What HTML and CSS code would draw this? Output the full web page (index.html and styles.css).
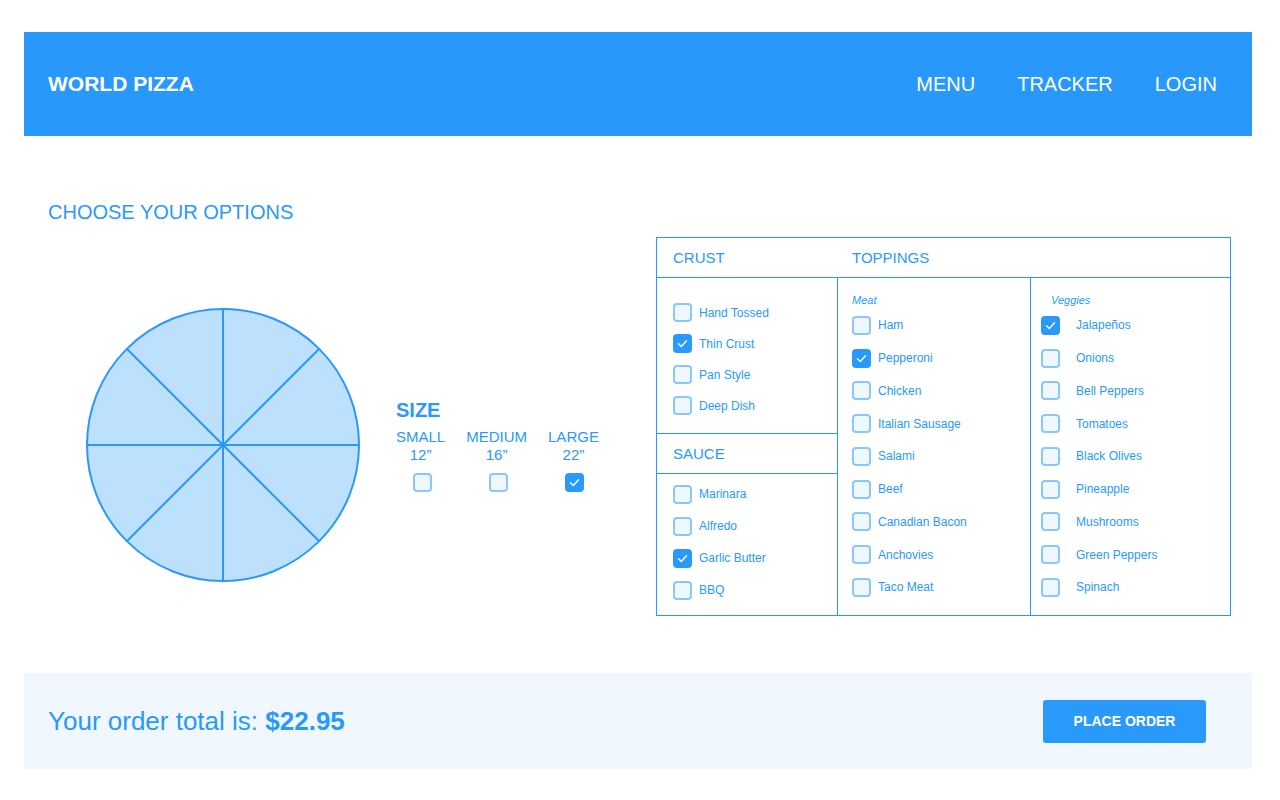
FILE: index.html
```html
<!DOCTYPE html>
<html lang="en">
<head>
<meta charset="utf-8">
<title>World Pizza</title>
<link rel="stylesheet" href="styles.css">
</head>
<body>
<header class="topbar">
  <div class="brand">WORLD PIZZA</div>
  <nav class="nav">
    <a class="nav-link">MENU</a>
    <a class="nav-link">TRACKER</a>
    <a class="nav-link">LOGIN</a>
  </nav>
</header>

<main class="builder">
  <h1 class="section-title">CHOOSE YOUR OPTIONS</h1>
  <div class="config">
    <div class="preview">
      <svg class="pizza" width="276" height="276" viewBox="0 0 276 276">
        <circle cx="138" cy="138" r="136" fill="#bde0fd" stroke="#2999fb" stroke-width="2"/>
        <g stroke="#2999fb" stroke-width="2">
          <line x1="138" y1="2" x2="138" y2="274"/>
          <line x1="2" y1="138" x2="274" y2="138"/>
          <line x1="41.8" y1="41.8" x2="234.2" y2="234.2"/>
          <line x1="234.2" y1="41.8" x2="41.8" y2="234.2"/>
        </g>
      </svg>
      <div class="size">
        <h2 class="size-title">SIZE</h2>
        <div class="size-options">
          <div class="size-opt">
            <span class="size-name">SMALL</span>
            <span class="size-inch">12”</span>
            <span class="box"></span>
          </div>
          <div class="size-opt">
            <span class="size-name">MEDIUM</span>
            <span class="size-inch">16”</span>
            <span class="box"></span>
          </div>
          <div class="size-opt">
            <span class="size-name">LARGE</span>
            <span class="size-inch">22”</span>
            <span class="box checked"><svg viewBox="0 0 19 19" width="19" height="19"><polyline points="5.5,9.8 8.3,12.4 13.5,6.8" fill="none" stroke="#fff" stroke-width="1.4" stroke-linecap="round" stroke-linejoin="round"/></svg></span>
          </div>
        </div>
      </div>
    </div>

    <div class="panel">
      <div class="panel-head crust-head">CRUST</div>
      <div class="panel-head toppings-head">TOPPINGS</div>

      <div class="col col-base">
        <ul class="list list-crust">
          <li class="item"><span class="box"></span><span class="label">Hand Tossed</span></li>
          <li class="item"><span class="box checked"><svg viewBox="0 0 19 19" width="19" height="19"><polyline points="5.5,9.8 8.3,12.4 13.5,6.8" fill="none" stroke="#fff" stroke-width="1.4" stroke-linecap="round" stroke-linejoin="round"/></svg></span><span class="label">Thin Crust</span></li>
          <li class="item"><span class="box"></span><span class="label">Pan Style</span></li>
          <li class="item"><span class="box"></span><span class="label">Deep Dish</span></li>
        </ul>
        <div class="sub-head">SAUCE</div>
        <ul class="list list-sauce">
          <li class="item"><span class="box"></span><span class="label">Marinara</span></li>
          <li class="item"><span class="box"></span><span class="label">Alfredo</span></li>
          <li class="item"><span class="box checked"><svg viewBox="0 0 19 19" width="19" height="19"><polyline points="5.5,9.8 8.3,12.4 13.5,6.8" fill="none" stroke="#fff" stroke-width="1.4" stroke-linecap="round" stroke-linejoin="round"/></svg></span><span class="label">Garlic Butter</span></li>
          <li class="item"><span class="box"></span><span class="label">BBQ</span></li>
        </ul>
      </div>

      <div class="col col-meat">
        <div class="group-label">Meat</div>
        <ul class="list list-topping">
          <li class="item"><span class="box"></span><span class="label">Ham</span></li>
          <li class="item"><span class="box checked"><svg viewBox="0 0 19 19" width="19" height="19"><polyline points="5.5,9.8 8.3,12.4 13.5,6.8" fill="none" stroke="#fff" stroke-width="1.4" stroke-linecap="round" stroke-linejoin="round"/></svg></span><span class="label">Pepperoni</span></li>
          <li class="item"><span class="box"></span><span class="label">Chicken</span></li>
          <li class="item"><span class="box"></span><span class="label">Italian Sausage</span></li>
          <li class="item"><span class="box"></span><span class="label">Salami</span></li>
          <li class="item"><span class="box"></span><span class="label">Beef</span></li>
          <li class="item"><span class="box"></span><span class="label">Canadian Bacon</span></li>
          <li class="item"><span class="box"></span><span class="label">Anchovies</span></li>
          <li class="item"><span class="box"></span><span class="label">Taco Meat</span></li>
        </ul>
      </div>

      <div class="col col-veg">
        <div class="group-label">Veggies</div>
        <ul class="list list-topping">
          <li class="item"><span class="box checked"><svg viewBox="0 0 19 19" width="19" height="19"><polyline points="5.5,9.8 8.3,12.4 13.5,6.8" fill="none" stroke="#fff" stroke-width="1.4" stroke-linecap="round" stroke-linejoin="round"/></svg></span><span class="label">Jalapeños</span></li>
          <li class="item"><span class="box"></span><span class="label">Onions</span></li>
          <li class="item"><span class="box"></span><span class="label">Bell Peppers</span></li>
          <li class="item"><span class="box"></span><span class="label">Tomatoes</span></li>
          <li class="item"><span class="box"></span><span class="label">Black Olives</span></li>
          <li class="item"><span class="box"></span><span class="label">Pineapple</span></li>
          <li class="item"><span class="box"></span><span class="label">Mushrooms</span></li>
          <li class="item"><span class="box"></span><span class="label">Green Peppers</span></li>
          <li class="item"><span class="box"></span><span class="label">Spinach</span></li>
        </ul>
      </div>
    </div>
  </div>
</main>

<footer class="order-bar">
  <p class="order-total">Your order total is: <strong class="price">$22.95</strong></p>
  <button class="order-btn">PLACE ORDER</button>
</footer>
</body>
</html>
```

FILE: styles.css
```css
* { box-sizing: border-box; }

body {
  margin: 0;
  padding: 32px 28px 0 24px;
  background: #ffffff;
  font-family: "Liberation Sans", Arial, Helvetica, sans-serif;
  color: #2999fb;
}

/* Header */
.topbar {
  height: 104px;
  background: #2899fb;
  display: flex;
  align-items: center;
  justify-content: space-between;
  padding: 0 35px 0 24px;
  color: #ffffff;
}
.brand {
  font-size: 21px;
  font-weight: 700;
  letter-spacing: 0;
}
.nav {
  display: flex;
  gap: 42px;
}
.nav-link {
  font-size: 20px;
  color: #ffffff;
  text-decoration: none;
}

/* Main */
.builder {
  padding: 64px 21px 0 24px;
}
.section-title {
  margin: 0;
  font-size: 20px;
  line-height: 24px;
  font-weight: 400;
  color: #2999fb;
}
.config {
  display: flex;
  align-items: flex-start;
  margin-top: 13px;
}
.preview {
  display: flex;
  align-items: center;
  margin-top: 70px;
  margin-left: 37px;
}
.pizza { display: block; }

.size {
  margin-left: 35px;
}
.size-title {
  margin: 0;
  font-size: 20px;
  line-height: 24px;
  font-weight: 700;
}
.size-options {
  display: flex;
  gap: 21px;
  margin-top: 6px;
}
.size-opt {
  display: flex;
  flex-direction: column;
  align-items: center;
  font-size: 15px;
  line-height: 18px;
}
.size-opt .box { margin-top: 9px; margin-left: 3px; }

/* Checkbox */
.box {
  width: 19px;
  height: 19px;
  flex: none;
  border: 2px solid #8bc7fb;
  border-radius: 4px;
  background: #eff7ff;
  display: block;
  position: relative;
}
.box.checked {
  background: #2999fb;
  border-color: #2999fb;
}
.box svg {
  position: absolute;
  left: -2px;
  top: -2px;
}

/* Options panel */
.panel {
  margin-left: auto;
  width: 575px;
  border: 1px solid #2999fb;
  display: grid;
  grid-template-columns: 181px 193px 199px;
  grid-template-rows: 40px auto;
}
.panel-head {
  display: flex;
  align-items: center;
  border-bottom: 1px solid #2999fb;
  font-size: 15px;
}
.crust-head { grid-column: 1; padding-left: 16px; }
.toppings-head { grid-column: 2 / 4; padding-left: 14px; }

.col-base, .col-meat { border-right: 1px solid #2999fb; }

.list {
  list-style: none;
  margin: 0;
  padding: 0;
}
.item {
  display: flex;
  align-items: center;
  font-size: 12px;
}
.label { margin-left: 7px; }

.list-crust {
  padding: 19px 0 12px 16px;
}
.list-crust .item { height: 31px; }

.sub-head {
  height: 41px;
  border-top: 1px solid #2999fb;
  border-bottom: 1px solid #2999fb;
  display: flex;
  align-items: center;
  padding-left: 16px;
  font-size: 15px;
}
.list-sauce {
  padding: 4px 0 9px 16px;
}
.list-sauce .item { height: 32px; }

.col-meat, .col-veg { padding-top: 13px; }
.group-label {
  font-size: 11px;
  line-height: 18px;
  font-style: italic;
}
.list-topping .item { height: 32.75px; }

.col-meat .group-label { padding-left: 14px; }
.col-meat .list { padding-left: 14px; }

.col-veg .group-label { padding-left: 20px; }
.col-veg .list { padding-left: 10px; }
.col-veg .label { margin-left: 16px; }

/* Footer */
.order-bar {
  margin-top: 57px;
  height: 96px;
  background: #f0f7ff;
  display: flex;
  align-items: center;
  justify-content: space-between;
  padding: 0 46px 0 24px;
}
.order-total {
  margin: 0;
  font-size: 26px;
  color: #2999fb;
}
.price { font-weight: 700; }
.order-btn {
  width: 163px;
  height: 43px;
  border: none;
  border-radius: 3px;
  background: #2999fb;
  color: #ffffff;
  font-family: "Liberation Sans", Arial, sans-serif;
  font-size: 14px;
  font-weight: 700;
  padding: 0;
}
```
